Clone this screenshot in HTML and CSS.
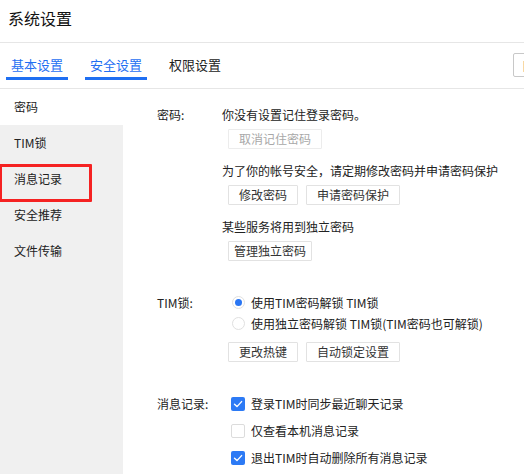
FILE: index.html
```html
<!DOCTYPE html>
<html lang="zh-CN">
<head>
<meta charset="utf-8">
<title>系统设置</title>
<link rel="stylesheet" href="styles.css">
</head>
<body>
<div class="header"><span class="title">系统设置</span></div>
<div class="tabs">
  <div class="tab active">基本设置</div>
  <div class="tab active">安全设置</div>
  <div class="tab">权限设置</div>
  <button class="tool-btn">目录设置</button>
</div>
<div class="main">
  <nav class="sidebar">
    <div class="nav-item current">密码</div>
    <div class="nav-item">TIM锁</div>
    <div class="nav-item marked">消息记录<span class="mark"></span></div>
    <div class="nav-item">安全推荐</div>
    <div class="nav-item">文件传输</div>
  </nav>
  <div class="content">
    <section class="group">
      <div class="label">密码:</div>
      <div class="body">
        <p class="line">你没有设置记住登录密码。</p>
        <div class="btns"><button class="btn disabled">取消记住密码</button></div>
        <p class="line">为了你的帐号安全，请定期修改密码并申请密码保护</p>
        <div class="btns"><button class="btn">修改密码</button><button class="btn">申请密码保护</button></div>
        <p class="line">某些服务将用到独立密码</p>
        <div class="btns"><button class="btn narrow">管理独立密码</button></div>
      </div>
    </section>
    <section class="group lock">
      <div class="label">TIM锁:</div>
      <div class="body">
        <div class="opt radio-row"><span class="radio on"></span><span class="opt-text">使用TIM密码解锁 TIM锁</span></div>
        <div class="opt radio-row"><span class="radio"></span><span class="opt-text">使用独立密码解锁 TIM锁(TIM密码也可解锁)</span></div>
        <div class="btns gap-top"><button class="btn">更改热键</button><button class="btn">自动锁定设置</button></div>
      </div>
    </section>
    <section class="group msg">
      <div class="label">消息记录:</div>
      <div class="body">
        <div class="opt check-row"><span class="check on"><svg viewBox="0 0 14 14" width="14" height="14"><path d="M3.5 7.2 L6 9.6 L10.6 4.6" fill="none" stroke="#fff" stroke-width="1.4" stroke-linecap="round" stroke-linejoin="round"/></svg></span><span class="opt-text">登录TIM时同步最近聊天记录</span></div>
        <div class="opt check-row"><span class="check"></span><span class="opt-text">仅查看本机消息记录</span></div>
        <div class="opt check-row"><span class="check on"><svg viewBox="0 0 14 14" width="14" height="14"><path d="M3.5 7.2 L6 9.6 L10.6 4.6" fill="none" stroke="#fff" stroke-width="1.4" stroke-linecap="round" stroke-linejoin="round"/></svg></span><span class="opt-text">退出TIM时自动删除所有消息记录</span></div>
      </div>
    </section>
  </div>
</div>
</body>
</html>
```
FILE: styles.css
```css
html, body {
  margin: 0;
  padding: 0;
  background: #fff;
  overflow: hidden;
}
body {
  width: 524px;
  height: 474px;
  font-family: "Noto Sans CJK SC", "Noto Sans", sans-serif;
  color: #222;
  font-size: 12px;
}
.header {
  height: 42px;
  border-bottom: 1px solid #e6e6e6;
  padding-left: 8px;
}
.title {
  display: block;
  font-size: 16px;
  line-height: 36px;
  color: #111;
}
.tabs {
  display: flex;
  align-items: flex-start;
  gap: 17px;
  height: 45px;
  border-bottom: 1px solid #e6e6e6;
  padding-left: 6px;
  box-sizing: border-box;
  height: 46px;
}
.tab {
  font-size: 13px;
  line-height: 18px;
  padding: 13px 5px 3px;
  border-bottom: 3px solid transparent;
  color: #222;
  width: 52px;
  white-space: nowrap;
}
.tab.active {
  color: #1f6ff2;
  border-bottom-color: #1f6ff2;
}
.tool-btn {
  margin-left: auto;
  margin-right: -58px;
  margin-top: 10px;
  height: 24px;
  width: 69px;
  border: 1px solid #c8c8c8;
  border-radius: 2px;
  background: #fff;
  font-family: inherit;
  font-size: 12px;
  color: #333;
  padding: 0 0 0 8px;
  text-align: left;
}
.main {
  display: flex;
  height: 385px;
}
.sidebar {
  width: 123px;
  flex: none;
  background: #f0f0f0;
}
.nav-item {
  height: 36px;
  line-height: 36px;
  padding-left: 14px;
  font-size: 12px;
  color: #222;
}
.nav-item.current {
  background: #fff;
}
.nav-item.marked {
  position: relative;
}
.mark {
  position: absolute;
  left: -1px;
  top: 3px;
  width: 87px;
  height: 32px;
  border: 3px solid #f52222;
  border-radius: 1px;
}
.content {
  flex: 1;
  padding: 17px 0 0 34px;
}
.group {
  display: flex;
}
.label {
  width: 65px;
  flex: none;
  line-height: 18px;
  color: #222;
}
.body {
  flex: 1;
}
.line {
  margin: 0 0 5px;
  line-height: 18px;
  white-space: nowrap;
}
.btns {
  display: flex;
  gap: 8px;
  margin: 0 0 13px 6px;
}
.btns:last-child {
  margin-bottom: 0;
}
.btn {
  height: 20px;
  box-sizing: border-box;
  border: 1px solid #e2e2e2;
  border-radius: 1px;
  background: #fff;
  font-family: inherit;
  font-size: 12px;
  line-height: 18px;
  color: #333;
  padding: 0 10px;
}
.btn.narrow {
  padding: 0 5px;
}
.btn.disabled {
  color: #a8a8a8;
  border-color: #ececec;
}
.lock {
  margin-top: 31px;
}
.lock .label {
  line-height: 21px;
}
.opt {
  display: flex;
  align-items: center;
  white-space: nowrap;
}
.radio-row {
  height: 21px;
}
.radio {
  width: 13px;
  height: 13px;
  box-sizing: border-box;
  border-radius: 50%;
  border: 1px solid #e0e0e0;
  margin-left: 10px;
  background: #fff;
  display: flex;
  align-items: center;
  justify-content: center;
  flex: none;
}
.radio.on::after {
  content: "";
  width: 7px;
  height: 7px;
  border-radius: 50%;
  background: #2a76f3;
}
.opt-text {
  margin-left: 6px;
}
.btns.gap-top {
  margin-top: 8px;
}
.msg {
  margin-top: 28px;
}
.msg .label {
  line-height: 27px;
}
.check-row {
  height: 27px;
}
.check {
  width: 14px;
  height: 14px;
  box-sizing: border-box;
  border: 1px solid #dcdcdc;
  border-radius: 2px;
  margin-left: 9px;
  background: #fff;
  flex: none;
  display: flex;
}
.check.on {
  border: none;
  background: #2c7af5;
}
.check svg {
  display: block;
}
```
